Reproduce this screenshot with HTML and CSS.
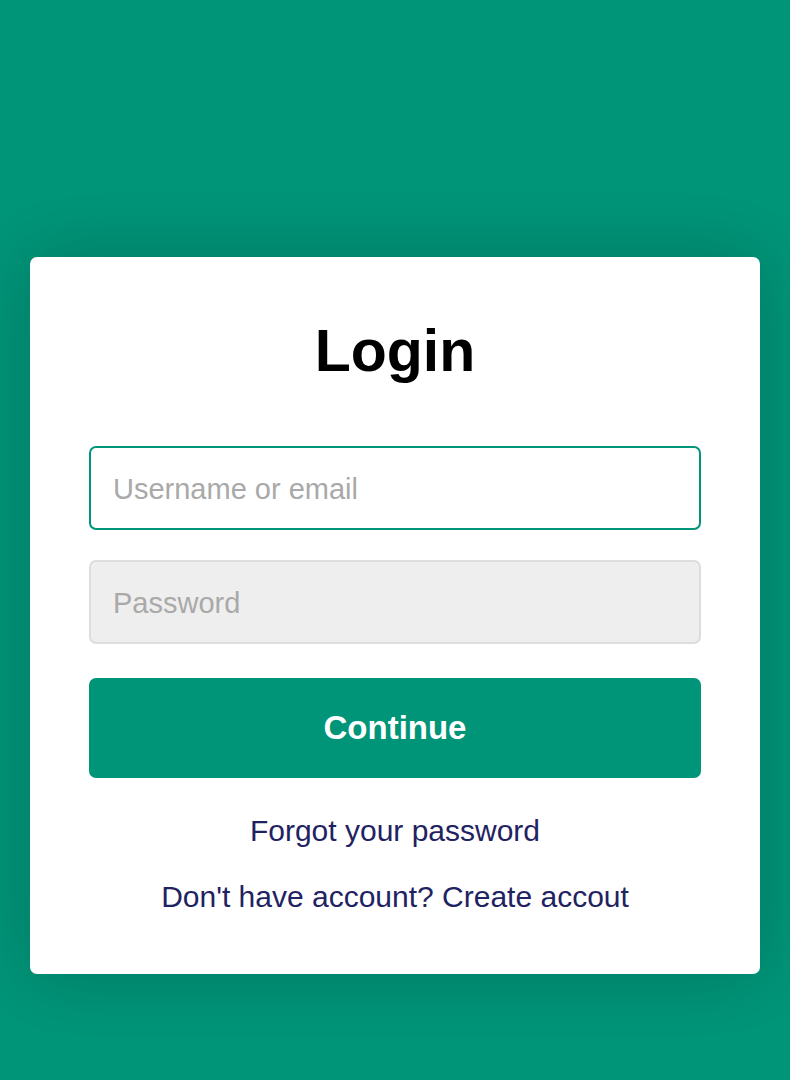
FILE: index.html
```html
<!DOCTYPE html>
<html lang="en">
<head>
<meta charset="utf-8">
<meta name="viewport" content="width=device-width, initial-scale=1">
<title>Login</title>
<link rel="stylesheet" href="styles.css">
</head>
<body>
<main class="card">
  <h1 class="title">Login</h1>
  <form class="form">
    <input class="field" type="text" placeholder="Username or email" aria-label="Username or email">
    <input class="field field-muted" type="password" placeholder="Password" aria-label="Password">
    <button class="submit" type="submit">Continue</button>
  </form>
  <nav class="links">
    <a class="link" href="#">Forgot your password</a>
    <a class="link" href="#">Don't have account? Create accout</a>
  </nav>
</main>
</body>
</html>
```

FILE: styles.css
```css
* {
  box-sizing: border-box;
}

body {
  margin: 0;
  padding: 257px 30px 40px;
  min-height: 100vh;
  background: #009579;
  font-family: "Liberation Sans", Arial, sans-serif;
}

.card {
  padding: 60px 59px;
  background: #fff;
  border-radius: 7px;
  box-shadow: 0 0 75px rgba(0, 0, 0, 0.2);
}

.title {
  margin: 0 0 60px;
  font-size: 59px;
  line-height: 69px;
  font-weight: 700;
  text-align: center;
  color: #000;
}

.form {
  display: flex;
  flex-direction: column;
}

.field {
  width: 100%;
  height: 84px;
  margin: 0 0 30px;
  padding: 2px 22px 0;
  border: 2px solid #009579;
  border-radius: 7px;
  background: #fff;
  font-family: inherit;
  font-size: 29px;
  color: #333;
  outline: none;
}

.field::placeholder {
  color: #a9a9a9;
  opacity: 1;
}

.field-muted {
  margin-bottom: 34px;
  border-color: #ddd;
  background: #eee;
}

.submit {
  height: 100px;
  padding: 0;
  border: 0;
  border-radius: 7px;
  background: #009579;
  font-family: inherit;
  font-size: 33px;
  font-weight: 700;
  color: #fff;
  cursor: pointer;
}

.links {
  display: flex;
  flex-direction: column;
  align-items: center;
  gap: 32px;
  margin-top: 36px;
}

.link {
  font-size: 30px;
  line-height: 34px;
  color: #1f2361;
  text-decoration: none;
}
```
